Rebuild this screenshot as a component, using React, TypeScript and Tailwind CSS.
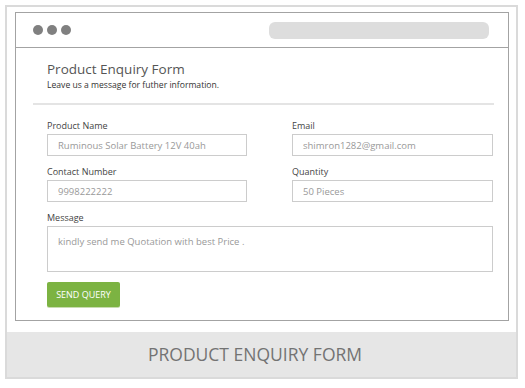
import React from "react";

const font = { fontFamily: '"Open Sans", "Noto Sans", sans-serif' };

function Field({ label, value }: { label: string; value: string }) {
  return (
    <div className="flex flex-col">
      <label className="h-[12px] text-[9px] leading-[12px] text-[#444]">{label}</label>
      <input
        readOnly
        defaultValue={value}
        className="mt-[2px] h-[22px] w-full border border-[#cccccc] bg-white px-[10px] text-[9.5px] text-[#999] outline-none"
        style={font}
      />
    </div>
  );
}

export default function App() {
  return (
    <div className="h-[388px] w-[525px] bg-white pl-[5px] pt-[5px]" style={font}>
      <div className="flex h-[374px] w-[513px] flex-col border-2 border-[#dadada]">
        <div className="ml-[8px] mr-[7px] mt-[5px] h-[309px] border border-[#a3a3a3] bg-white">
          {/* browser header */}
          <div className="flex h-[35px] items-center border-b border-[#a3a3a3] pl-[17px] pr-[19px]">
            <div className="flex gap-[4px]">
              <span className="h-[10px] w-[10px] rounded-full bg-[#808080]" />
              <span className="h-[10px] w-[10px] rounded-full bg-[#808080]" />
              <span className="h-[10px] w-[10px] rounded-full bg-[#808080]" />
            </div>
            <div className="ml-auto h-[17px] w-[220px] rounded-[6px] bg-[#dddddd]" />
          </div>

          {/* heading */}
          <div className="pl-[31px] pt-[12px]">
            <h1 className="h-[18px] text-[13.5px] leading-[18px] text-[#555]">Product Enquiry Form</h1>
            <p className="mt-[1px] h-[12px] text-[8.6px] leading-[12px] text-[#333]">
              Leave us a message for futher information.
            </p>
          </div>
          <div className="ml-[17px] mr-[14px] mt-[12px] h-[2px] bg-[#e4e4e4]" />

          {/* form */}
          <form className="ml-[31px] mr-[15px] mt-[15px] flex flex-col">
            <div className="grid grid-cols-[200px_201px] gap-x-[45px] gap-y-[10px]">
              <Field label="Product Name" value="Ruminous Solar Battery 12V 40ah" />
              <Field label="Email" value="shimron1282@gmail.com" />
              <Field label="Contact Number" value="9998222222" />
              <Field label="Quantity" value="50 Pieces" />
            </div>
            <div className="mt-[10px] flex flex-col">
              <label className="h-[12px] text-[9px] leading-[12px] text-[#444]">Message</label>
              <textarea
                readOnly
                defaultValue="kindly send me Quotation with best Price ."
                className="mt-[2px] h-[46px] w-full resize-none border border-[#cccccc] bg-white px-[10px] pt-[8px] text-[9.5px] leading-[13px] text-[#999] outline-none"
                style={font}
              />
            </div>
            <div className="mt-[10px]">
              <button
                type="button"
                className="flex h-[25px] w-[73px] items-center justify-center rounded-[2px] bg-[#7cb342] text-[9px] text-white shadow-[0_1px_0_#c8dcb0]"
                style={font}
              >
                SEND QUERY
              </button>
            </div>
          </form>
        </div>

        {/* footer caption */}
        <div className="mt-[11px] flex h-[45px] items-center justify-center bg-[#e6e6e6] pr-[13px]">
          <span className="text-[17.5px] leading-none text-[#737373]">PRODUCT ENQUIRY FORM</span>
        </div>
      </div>
    </div>
  );
}
